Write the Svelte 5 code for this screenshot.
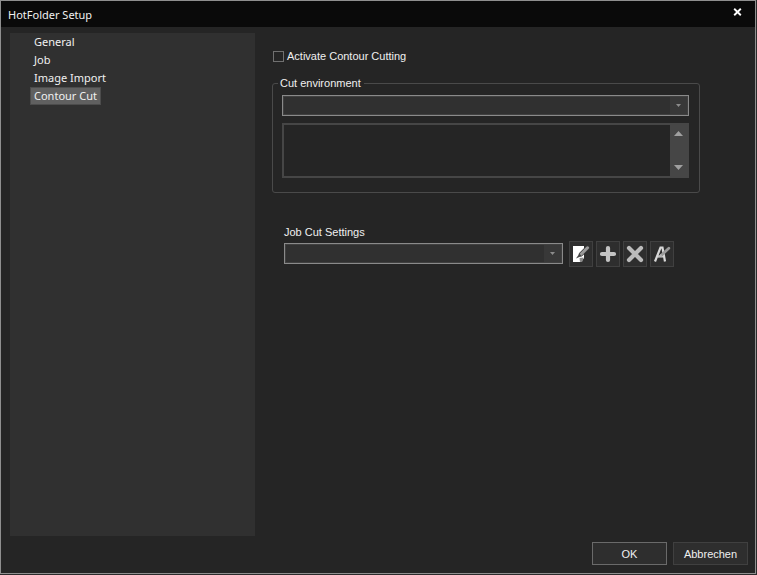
<script>
  const pages = ["General", "Job", "Image Import", "Contour Cut"];
  let activePage = $state("Contour Cut");

  let contourCutting = $state(false);
  let environment = $state("");
  let jobSettings = $state("");
  let description = $state("");
  let descriptionBox;

  function scrollDescription(step) {
    descriptionBox.scrollTop += step;
  }
</script>

<div class="window">
  <header class="titlebar">
    <h1>HotFolder Setup</h1>
    <button class="close" aria-label="Close">
      <svg width="9" height="8" viewBox="0 0 9 8">
        <path d="M1.2 0.8 L7.8 7.2 M7.8 0.8 L1.2 7.2" stroke="#fff" stroke-width="1.9" />
      </svg>
    </button>
  </header>

  <div class="body">
    <nav class="sidebar">
      {#each pages as page}
        <button
          class="page"
          class:active={page === activePage}
          onclick={() => (activePage = page)}>{page}</button
        >
      {/each}
    </nav>

    <main class="content">
      <label class="check">
        <input type="checkbox" bind:checked={contourCutting} />
        Activate Contour Cutting
      </label>

      <fieldset>
        <legend>Cut environment</legend>
        <div class="combo">
          <select aria-label="Cut environment" bind:value={environment}>
            <option value=""></option>
          </select>
          <svg class="arrow" width="5" height="3" viewBox="0 0 5 3">
            <path d="M0 0 H5 L2.5 3 Z" fill="#8c8c8c" />
          </svg>
        </div>
        <div class="description">
          <textarea
            aria-label="Description"
            bind:value={description}
            bind:this={descriptionBox}
          ></textarea>
          <div class="scroll">
            <button aria-label="Scroll up" onclick={() => scrollDescription(-14)}>
              <svg width="9" height="5" viewBox="0 0 9 5">
                <path d="M0 5 H9 L4.5 0 Z" fill="#a0a0a0" />
              </svg>
            </button>
            <button aria-label="Scroll down" onclick={() => scrollDescription(14)}>
              <svg width="9" height="5" viewBox="0 0 9 5">
                <path d="M0 0 H9 L4.5 5 Z" fill="#a0a0a0" />
              </svg>
            </button>
          </div>
        </div>
      </fieldset>

      <section class="job">
        <label for="job-settings">Job Cut Settings</label>
        <div class="row">
          <div class="combo">
            <select id="job-settings" bind:value={jobSettings}>
              <option value=""></option>
            </select>
            <svg class="arrow" width="5" height="3" viewBox="0 0 5 3">
              <path d="M0 0 H5 L2.5 3 Z" fill="#8c8c8c" />
            </svg>
          </div>
          <div class="tools">
            <button class="tool" aria-label="Edit">
              <svg width="18" height="18" viewBox="0 0 18 18">
                <path d="M1 1 H12 V13 L9 17 H1 Z" fill="#fff" />
                <path d="M7.5 13 L11.5 12.5 L10.5 16.5 L8 17 Z" fill="#8a8a8a" />
                <path d="M15.5 2.8 L9 9.3" stroke="#3a3a3a" stroke-width="4.4" stroke-linecap="round" />
                <path d="M15.5 2.8 L8.6 9.7" stroke="#9a9a9a" stroke-width="3" stroke-linecap="round" />
                <path d="M7.4 8.6 L4 13.4 L9.6 11 Z" fill="#444" />
              </svg>
            </button>
            <button class="tool" aria-label="Add">
              <svg width="18" height="18" viewBox="0 0 18 18">
                <path
                  d="M9 3 V15 M3 9 H15"
                  stroke="#c4c4c4"
                  stroke-width="4.2"
                  stroke-linecap="round"
                />
              </svg>
            </button>
            <button class="tool" aria-label="Delete">
              <svg width="18" height="18" viewBox="0 0 18 18">
                <path
                  d="M3 3 L15 15 M15 3 L3 15"
                  stroke="#bcbcbc"
                  stroke-width="4.2"
                  stroke-linecap="round"
                />
              </svg>
            </button>
            <button class="tool" aria-label="Rename">
              <svg width="18" height="18" viewBox="0 0 18 18" fill="none">
                <path
                  d="M2 16.5 L7.5 2.5 H9.5 L12 16.5 M4.5 11.5 H11"
                  stroke="#d8d8d8"
                  stroke-width="2.2"
                />
                <path d="M15.8 3.2 L8.4 10.2" stroke="#9a9a9a" stroke-width="2.8" stroke-linecap="round" />
                <path d="M7.6 9 L4.5 12.6 L9.6 11.4 Z" fill="#b8b8b8" />
              </svg>
            </button>
          </div>
        </div>
      </section>
    </main>
  </div>

  <footer class="actions">
    <button class="default">OK</button>
    <button>Abbrechen</button>
  </footer>
</div>

<style>
  :global(body) {
    background: #2b2b2b;
  }

  :global(#app) {
    display: grid;
    box-sizing: border-box;
    min-height: 100vh;
    padding: 0 1px 1px 0;
  }

  .window {
    display: flex;
    flex-direction: column;
    border: 1px solid #8f8f8f;
    background: #252525;
    color: #f0f0f0;
    font-family: "Liberation Sans", Arial, sans-serif;
    font-size: 11px;
    line-height: 14px;
  }

  button,
  select,
  textarea {
    box-sizing: border-box;
    margin: 0;
    padding: 0;
    border: 0;
    background: none;
    color: inherit;
    font: inherit;
  }

  svg {
    display: block;
  }

  .titlebar {
    display: flex;
    align-items: center;
    justify-content: space-between;
    height: 26px;
    padding: 0 8px 0 7px;
    background: #0a0a0a;
  }

  h1 {
    margin: 0;
    padding-top: 2px;
    font: 11px/16px "Noto Sans", "Segoe UI", sans-serif;
  }

  .close {
    display: grid;
    place-items: center;
    width: 20px;
    height: 20px;
    margin-bottom: 4px;
  }

  .body {
    display: flex;
    flex: 1;
    gap: 17px;
    padding: 6px 55px 0 9px;
  }

  .sidebar {
    box-sizing: border-box;
    flex: 0 0 245px;
    padding-left: 20px;
    background: #303030;
  }

  .page {
    display: block;
    height: 18px;
    padding: 0 3px;
    border: 1px solid transparent;
    font: 11px/16px "Noto Sans", "Segoe UI", sans-serif;
  }

  .page.active {
    border-color: #4c4c4c;
    background: #606060;
  }

  .content {
    flex: 1;
    min-width: 0;
    padding-top: 16px;
  }

  .check {
    display: flex;
    align-items: center;
    gap: 3px;
    padding-left: 1px;
  }

  .check input {
    appearance: none;
    box-sizing: border-box;
    width: 11px;
    height: 11px;
    margin: 0;
    border: 1px solid #707070;
    background: #252525;
  }

  .check input:checked {
    background: #c4c4c4;
    box-shadow: inset 0 0 0 2px #252525;
  }

  fieldset {
    min-width: 0;
    margin: 13px 0 0;
    padding: 5px 10px 14px 9px;
    border: 1px solid #4a4a4a;
    border-radius: 3px;
  }

  legend {
    margin-left: -4px;
    padding: 0 3px 0 2px;
  }

  .combo {
    display: grid;
    grid-template-columns: 1fr 19px;
    align-items: center;
    justify-items: center;
    height: 21px;
  }

  .combo select {
    grid-area: 1 / 1 / 2 / 3;
    appearance: none;
    width: 100%;
    height: 21px;
    padding: 0 20px 0 4px;
    border: 1px solid #8a8a8a;
    border-radius: 0;
    background: linear-gradient(to left, #383838 18px, #303030 18px);
    box-shadow: inset 0 0 0 1px #404040;
  }

  .arrow {
    grid-area: 1 / 2 / 2 / 3;
    z-index: 1;
    margin-right: 2px;
    pointer-events: none;
  }

  .description {
    display: flex;
    box-sizing: border-box;
    height: 55px;
    margin-top: 7px;
    border: 2px solid #464646;
  }

  .description textarea {
    flex: 1;
    min-width: 0;
    padding: 2px 4px;
    overflow: hidden;
    resize: none;
  }

  .scroll {
    display: flex;
    flex-direction: column;
    justify-content: space-between;
    width: 17px;
    background: #464646;
  }

  .scroll button {
    display: grid;
    place-items: center;
    height: 17px;
  }

  .job {
    margin: 32px 26px 0 12px;
  }

  .row {
    display: flex;
    align-items: flex-start;
    gap: 6px;
    margin-top: 2px;
  }

  .row .combo {
    flex: 1;
    margin-top: 2px;
  }

  .tools {
    display: flex;
    gap: 3px;
  }

  .tool {
    display: grid;
    place-items: center;
    width: 24px;
    height: 26px;
    border: 1px solid #404040;
    background: #2e2e2e;
  }

  .actions {
    display: flex;
    justify-content: flex-end;
    gap: 6px;
    padding: 6px 7px 8px;
  }

  .actions button {
    width: 75px;
    height: 23px;
    border: 1px solid #404040;
    background: #2e2e2e;
  }

  .actions .default {
    border-color: #6a6a6a;
  }
</style>
